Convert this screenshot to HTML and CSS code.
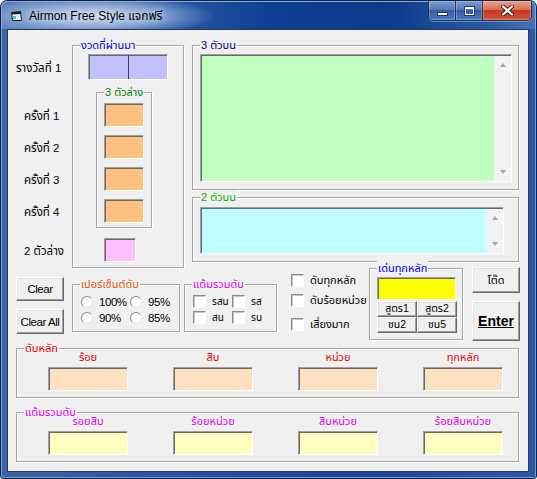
FILE: index.html
```html
<!DOCTYPE html>
<html lang="th">
<head>
<meta charset="utf-8">
<title>Airmon Free Style</title>
<link rel="stylesheet" href="styles.css">
</head>
<body>
<div class="window">
  <div class="titlebar">
    <svg class="app-icon" width="13" height="12" viewBox="0 0 13 12">
      <path d="M1.5 2.5 L10.5 1.5 L11.5 10.5 L2.5 10.5 Z" fill="#e8fbff" stroke="#1a1a1a"/>
      <path d="M1.8 2.5 L10.5 1.5 L10.8 4 L2 4.6 Z" fill="#1a1a1a"/>
      <rect x="3" y="6" width="3" height="3" fill="#39c6e8"/>
    </svg>
    <span class="title">Airmon Free Style แจกฟรี</span>
    <div class="cbtns">
      <div class="cbtn min"><span class="g-min"></span></div>
      <div class="cbtn max"><span class="g-max"></span></div>
      <div class="cbtn close">
        <svg width="13" height="11" viewBox="0 0 13 11">
          <path d="M2 1.5 L11 9.5 M11 1.5 L2 9.5" stroke="#3a1a14" stroke-width="4" stroke-linecap="round"/>
          <path d="M2 1.5 L11 9.5 M11 1.5 L2 9.5" stroke="#ffffff" stroke-width="2.2" stroke-linecap="round"/>
        </svg>
      </div>
    </div>
  </div>

  <div class="client">
    <div class="top">
      <div class="left-panel">
        <div class="grp grp-outer"><span class="grp-title t-blue">งวดที่ผ่านมา</span></div>
        <div class="grp grp-inner"><span class="grp-title t-green">3 ตัวล่าง</span></div>

        <div class="lbl lbl-first row-2">รางวัลที่ 1</div>
        <div class="field purple row-2"><span class="half"></span><span class="half split"></span></div>

        <div class="lbl row-5">ครั้งที่ 1</div>
        <div class="field orange row-5"></div>
        <div class="lbl row-7">ครั้งที่ 2</div>
        <div class="field orange row-7"></div>
        <div class="lbl row-9">ครั้งที่ 3</div>
        <div class="field orange row-9"></div>
        <div class="lbl row-11">ครั้งที่ 4</div>
        <div class="field orange row-11"></div>

        <div class="lbl row-14">2 ตัวล่าง</div>
        <div class="field pink row-14"></div>
      </div>

      <div class="right-panel">
        <div class="grp g-three">
          <span class="grp-title t-navy">3 ตัวบน</span>
          <div class="memo memo-green">
            <div class="memo-body"></div>
            <div class="vscroll"><span class="arr-up"></span><span class="arr-down"></span></div>
          </div>
        </div>
        <div class="grp g-two">
          <span class="grp-title t-lgreen">2 ตัวบน</span>
          <div class="memo memo-cyan">
            <div class="memo-body"></div>
            <div class="vscroll"><span class="arr-up"></span><span class="arr-down"></span></div>
          </div>
        </div>
      </div>
    </div>

    <div class="middle">
      <div class="btn-col">
        <div class="btn latin btn-clear">Clear</div>
        <div class="btn latin btn-clearall">Clear All</div>
      </div>

      <div class="grp pct">
        <span class="grp-title t-orange">เปอร์เซ็นต์ดับ</span>
        <div class="opt-grid pct-grid">
          <div class="opt"><span class="radio"></span><span class="latin">100%</span></div>
          <div class="opt"><span class="radio"></span><span class="latin">95%</span></div>
          <div class="opt"><span class="radio"></span><span class="latin">90%</span></div>
          <div class="opt"><span class="radio"></span><span class="latin">85%</span></div>
        </div>
      </div>

      <div class="grp sum">
        <span class="grp-title t-magenta">แต้มรวมดับ</span>
        <div class="opt-grid sum-grid">
          <div class="opt"><span class="check"></span><span class="th-sm">รสน</span></div>
          <div class="opt"><span class="check"></span><span class="th-sm">รส</span></div>
          <div class="opt"><span class="check"></span><span class="th-sm">สน</span></div>
          <div class="opt"><span class="check"></span><span class="th-sm">รน</span></div>
        </div>
      </div>

      <div class="checks">
        <div class="opt"><span class="check"></span><span>ดับทุกหลัก</span></div>
        <div class="opt"><span class="check"></span><span>ดับร้อยหน่วย</span></div>
        <div class="opt opt-last"><span class="check"></span><span>เสี่ยงมาก</span></div>
      </div>

      <div class="grp hot">
        <span class="grp-title t-blue">เด่นทุกหลัก</span>
        <div class="field yellow"></div>
        <div class="formula-grid">
          <div class="btn mini">สูตร1</div>
          <div class="btn mini">สูตร2</div>
          <div class="btn mini">ชน2</div>
          <div class="btn mini">ชน5</div>
        </div>
      </div>

      <div class="btn-col btn-col-right">
        <div class="btn btn-tod">โต๊ด</div>
        <div class="btn btn-enter"><u>Enter</u></div>
      </div>
    </div>

    <div class="grp digits">
      <span class="grp-title t-red">ดับหลัก</span>
      <div class="four-grid">
        <div class="cap t-red">ร้อย</div>
        <div class="cap t-red">สิบ</div>
        <div class="cap t-red">หน่วย</div>
        <div class="cap t-red">ทุกหลัก</div>
        <div class="field peach"></div>
        <div class="field peach"></div>
        <div class="field peach"></div>
        <div class="field peach"></div>
      </div>
    </div>

    <div class="grp sums">
      <span class="grp-title t-magenta">แต้มรวมดับ</span>
      <div class="four-grid">
        <div class="cap t-magenta">ร้อยสิบ</div>
        <div class="cap t-magenta">ร้อยหน่วย</div>
        <div class="cap t-magenta">สิบหน่วย</div>
        <div class="cap t-magenta">ร้อยสิบหน่วย</div>
        <div class="field cream"></div>
        <div class="field cream"></div>
        <div class="field cream"></div>
        <div class="field cream"></div>
      </div>
    </div>
  </div>
</div>
</body>
</html>
```

FILE: styles.css
```css
html, body {
  margin: 0;
  padding: 0;
  background: #ffffff;
}

body {
  font-family: "Liberation Sans", "Noto Sans Thai", "Tahoma", sans-serif;
  font-size: 11px;
  color: #000;
}

.latin {
  font-family: "Liberation Sans", sans-serif;
  font-size: 11.5px;
  letter-spacing: -0.45px;
}

/* ---------- window chrome ---------- */
.window {
  width: 537px;
  height: 479px;
  box-sizing: border-box;
  border: 1px solid #0e2447;
  border-radius: 7px 7px 3px 3px;
  background: linear-gradient(to right, #3a64aa 0%, #1f4f9e 40%, #1a4896 70%, #2b59a5 100%);
  box-shadow: inset 0 0 0 1px #7c9bd0;
  overflow: hidden;
  display: flex;
  flex-direction: column;
}

.titlebar {
  height: 28px;
  flex: none;
  display: flex;
  align-items: center;
  background:
    radial-gradient(ellipse 120px 20px at 95px 15px, rgba(214, 226, 244, 0.95) 0%, rgba(190, 208, 236, 0.6) 55%, rgba(190, 208, 236, 0) 100%),
    linear-gradient(to right, #5b80bd 0%, #2a5aa6 30%, #0f3f92 50%, #0c3a8b 72%, #2a5aa6 92%, #4a73b6 100%);
  border-radius: 6px 6px 0 0;
  box-shadow: inset 0 1px 0 #8fa9d6, inset 1px 0 0 #8fa9d6, inset -1px 0 0 #8fa9d6;
}

.app-icon {
  margin-left: 9px;
  margin-top: 2px;
  flex: none;
}

.title {
  margin-left: 6px;
  margin-top: 1px;
  font-size: 12px;
  color: #000;
  text-shadow: 0 0 6px rgba(255, 255, 255, 0.9);
  white-space: nowrap;
}

.cbtns {
  display: flex;
  align-self: flex-start;
  margin-left: auto;
  margin-right: 4px;
  height: 19px;
  border: 1px solid #1d2f52;
  border-top: none;
  border-radius: 0 0 5px 5px;
  overflow: hidden;
  box-shadow: 0 1px 0 rgba(255, 255, 255, 0.35);
}

.cbtn {
  display: flex;
  align-items: center;
  justify-content: center;
  background: linear-gradient(#7a9dd0 0%, #5479b8 45%, #345ea4 50%, #4a78bf 100%);
  box-shadow: inset 0 0 0 1px rgba(255, 255, 255, 0.25);
}

.cbtn + .cbtn {
  border-left: 1px solid #1d2f52;
}

.min { width: 26px; }
.max { width: 26px; }
.close {
  width: 48px;
  background: linear-gradient(#eba08c 0%, #dc6f55 45%, #c43a1f 50%, #d2553a 100%);
}

.g-min {
  width: 9px;
  height: 2px;
  margin-top: 6px;
  background: #fff;
  border: 1px solid #2a3550;
}

.g-max {
  width: 7px;
  height: 5px;
  border: 1px solid #fff;
  border-top-width: 2px;
  outline: 1px solid #2a3550;
}

/* ---------- client ---------- */
.client {
  margin-left: 6px;
  width: 522px;
  height: 443px;
  box-sizing: border-box;
  border: 1px solid #22385c;
  background: #f0f0f0;
  padding: 15px 9px 0 8px;
}

/* group boxes */
.grp {
  position: relative;
  box-sizing: border-box;
  border: 1px solid #a7a7a7;
  box-shadow: inset 1px 1px 0 #ffffff, 1px 1px 0 #ffffff;
}

.grp-title {
  position: absolute;
  top: -8px;
  left: 7px;
  padding: 0 1px;
  line-height: 14px;
  background: #f0f0f0;
  white-space: nowrap;
}

.t-blue { color: #0000e0; }
.t-green { color: #008000; }
.t-navy { color: #000080; }
.t-lgreen { color: #00b000; }
.t-orange { color: #e05a10; }
.t-magenta { color: #e000e0; }
.t-red { color: #e00000; }

/* sunken fields */
.field {
  box-sizing: border-box;
  border: 1px solid;
  border-color: #a0a0a0 #ffffff #ffffff #a0a0a0;
  box-shadow: inset 1px 1px 0 #696969;
}

.purple { background: #c0c0ff; display: flex; }
.purple .half { flex: 1; }
.purple .split { border-left: 1px solid #404040; }
.orange { background: #ffc080; }
.pink { background: #ffc0ff; }
.yellow { background: #ffff00; }
.peach { background: #ffe0c0; }
.cream { background: #ffffc0; }

/* ---------- top section ---------- */
.top {
  display: flex;
  gap: 8px;
}

.left-panel {
  width: 168px;
  flex: none;
  display: grid;
  grid-template-columns: 56px 16px 8px 8px 32px 8px 8px 16px 16px;
  grid-template-rows: 9px 26px 12px 11px 24px 8px 24px 8px 24px 8px 24px 5px 10px 24px 6px;
}

.grp-outer { grid-column: 2 / 10; grid-row: 1 / 16; }
.grp-inner { grid-column: 4 / 8; grid-row: 4 / 13; }

.lbl {
  grid-column: 1;
  align-self: center;
  padding-left: 8px;
  padding-top: 2px;
  white-space: nowrap;
  font-size: 11.5px;
}

.lbl-first { padding-left: 0; }

.purple { grid-column: 3 / 9; }
.orange { grid-column: 5 / 7; }
.pink { grid-column: 5 / 6; }

.row-2 { grid-row: 2; }
.row-5 { grid-row: 5; }
.row-7 { grid-row: 7; }
.row-9 { grid-row: 9; }
.row-11 { grid-row: 11; }
.row-14 { grid-row: 14; }

.right-panel {
  flex: 1;
  display: flex;
  flex-direction: column;
  gap: 7px;
}

.g-three {
  height: 145px;
  padding: 8px 6px 7px 7px;
  display: flex;
}

.g-two {
  height: 65px;
  padding: 9px 14px 7px 7px;
  display: flex;
}

.memo {
  flex: 1;
  display: flex;
  box-sizing: border-box;
  border: 1px solid;
  border-color: #a0a0a0 #ffffff #ffffff #a0a0a0;
  box-shadow: inset 1px 1px 0 #696969;
  padding: 1px 0 0 1px;
}

.memo-body { flex: 1; }
.memo-green .memo-body { background: #c0ffc0; }
.memo-cyan .memo-body { background: #c0ffff; }

.vscroll {
  width: 17px;
  flex: none;
  background: #f3f3f3;
  display: flex;
  flex-direction: column;
  justify-content: space-between;
  align-items: center;
  padding: 7px 0 7px;
  box-sizing: border-box;
}

.arr-up {
  width: 0;
  height: 0;
  border-left: 3px solid transparent;
  border-right: 3px solid transparent;
  border-bottom: 4px solid #a8a8a8;
}

.arr-down {
  width: 0;
  height: 0;
  border-left: 3px solid transparent;
  border-right: 3px solid transparent;
  border-top: 4px solid #a8a8a8;
}

/* ---------- middle section ---------- */
.middle {
  display: flex;
  align-items: flex-start;
  height: 75px;
  margin-top: -1px;
}

.btn {
  box-sizing: border-box;
  display: flex;
  align-items: center;
  justify-content: center;
  background: #f0f0f0;
  border: 1px solid;
  border-color: #ffffff #696969 #696969 #ffffff;
  box-shadow: inset -1px -1px 0 #a0a0a0, inset 1px 1px 0 #e3e3e3;
  white-space: nowrap;
}

.btn-col {
  width: 48px;
  flex: none;
  display: flex;
  flex-direction: column;
  gap: 8px;
  padding-top: 10px;
}

.btn-clear { height: 24px; }
.btn-clearall { height: 25px; }

.pct {
  margin-left: 8px;
  margin-top: 17px;
  width: 108px;
  height: 48px;
  flex: none;
  padding: 10px 0 0 8px;
}

.sum {
  margin-left: 4px;
  margin-top: 17px;
  width: 93px;
  height: 48px;
  flex: none;
  padding: 10px 0 0 8px;
}

.opt-grid {
  display: grid;
  row-gap: 3px;
}

.pct-grid { grid-template-columns: 49px 49px; }
.sum-grid { grid-template-columns: 39px 39px; }

.opt {
  display: flex;
  align-items: center;
  height: 13px;
  white-space: nowrap;
}

.radio {
  width: 10px;
  height: 10px;
  flex: none;
  border-radius: 50%;
  background: #fff;
  border: 1px solid;
  border-color: #8a8a8a #e6e6e6 #e6e6e6 #8a8a8a;
  margin-right: 6px;
}

.check {
  width: 11px;
  height: 11px;
  flex: none;
  background: #fff;
  border: 1px solid;
  border-color: #8a8a8a #ffffff #ffffff #8a8a8a;
  box-shadow: inset 1px 1px 0 #c8c8c8;
  margin-right: 6px;
}

.th-sm { font-size: 10px; }

.checks {
  width: 78px;
  flex: none;
  margin-left: 14px;
  padding-top: 7px;
  display: flex;
  flex-direction: column;
  gap: 7px;
}

.checks .opt-last { margin-top: 4px; }

.hot {
  margin-top: 1px;
  width: 94px;
  height: 72px;
  flex: none;
  padding: 8px 0 0 7px;
}

.hot .yellow {
  width: 79px;
  height: 23px;
}

.formula-grid {
  display: grid;
  grid-template-columns: 40px 40px;
  grid-template-rows: 16px 16px;
  margin-top: 1px;
}

.mini { font-size: 10.5px; }

.btn-col-right {
  margin-left: 9px;
  padding-top: 0;
}

.btn-tod { height: 26px; }
.btn-enter {
  height: 40px;
  font-family: "Liberation Sans", sans-serif;
  font-weight: bold;
  font-size: 14px;
}

/* ---------- bottom groups ---------- */
.digits {
  margin-top: 6px;
  height: 50px;
  padding: 1px 0 0 31px;
}

.sums {
  margin-top: 14px;
  height: 50px;
  padding: 1px 0 0 31px;
}

.four-grid {
  display: grid;
  grid-template-columns: repeat(4, 80px);
  grid-template-rows: 15px 24px;
  column-gap: 45px;
  row-gap: 2px;
}

.cap {
  text-align: center;
  white-space: nowrap;
  line-height: 15px;
}
```
